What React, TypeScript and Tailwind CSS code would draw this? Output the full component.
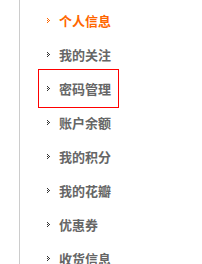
import React from 'react';

const items = ['个人信息', '我的关注', '密码管理', '账户余额', '我的积分', '我的花瓣', '优惠券', '收货信息'];

// little dotted arrow before each menu entry
const Bullet: React.FC<{ color: string }> = ({ color }) => (
  <svg width="4" height="5" viewBox="0 0 4 5" className="shrink-0" shapeRendering="crispEdges">
    {[
      [0, 0],
      [1, 1],
      [0, 2],
      [2, 2],
      [1, 3],
      [0, 4],
    ].map(([x, y]) => (
      <rect key={`${x}-${y}`} x={x} y={y} width="1" height="1" fill={color} />
    ))}
  </svg>
);

const App: React.FC = () => {
  const active = 0;
  const boxed = 2;

  return (
    <div
      className="w-[202px] h-[264px] bg-white overflow-hidden flex"
      style={{ fontFamily: '"Noto Sans CJK SC", "Noto Sans", sans-serif' }}
    >
      <div className="w-[19px] shrink-0" />
      <ul className="flex-1 border-l border-[#cccccc] flex flex-col pt-[3px]">
        {items.map((label, i) => (
          <li key={label} className="relative h-[34px] shrink-0 flex items-center pl-[27px] gap-[8px]">
            {i === boxed && (
              <span className="absolute left-[18px] top-[-2px] w-[81px] h-[39px] border border-[#ff0000]" />
            )}
            <Bullet color={i === active ? '#ff6600' : '#333333'} />
            <span
              className={`text-[13px] font-bold leading-none ${
                i === active ? 'text-[#ff6600]' : 'text-[#666666]'
              }`}
            >
              {label}
            </span>
          </li>
        ))}
      </ul>
    </div>
  );
};

export default App;
